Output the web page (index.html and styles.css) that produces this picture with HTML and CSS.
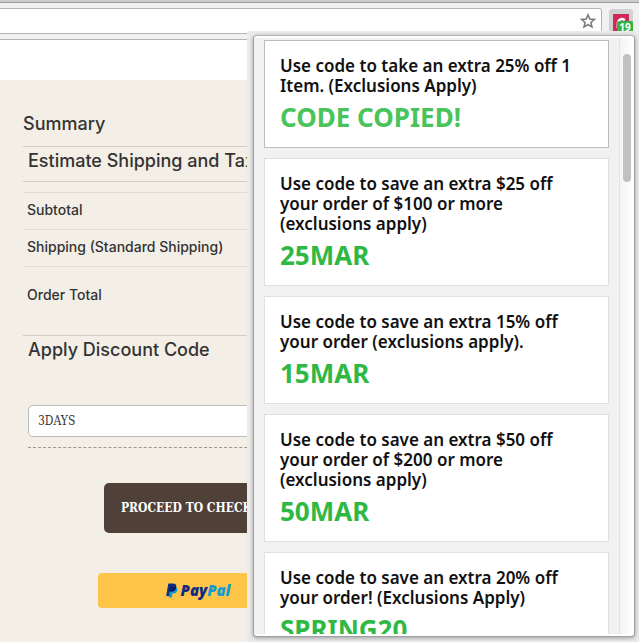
FILE: index.html
```
<!DOCTYPE html>
<html lang="en">
<head>
<meta charset="utf-8">
<meta name="viewport" content="width=device-width, initial-scale=1">
<title>Checkout</title>
<link rel="stylesheet" href="styles.css">
</head>
<body>

<header class="toolbar">
	<div class="addressBar">
		<input class="address" type="text" aria-label="Address">
		<button class="star" aria-label="Bookmark this page">
			<svg width="16" height="16" viewBox="0 0 16 16"><path d="M8 1.8 L9.8 6 L14.4 6.4 L10.9 9.4 L12 13.9 L8 11.5 L4 13.9 L5.1 9.4 L1.6 6.4 L6.2 6 Z" fill="none" stroke="#747679" stroke-width="1.5"/></svg>
		</button>
	</div>
	<button class="extension" aria-label="Coupons">
		<svg width="16" height="18" viewBox="0 0 16 18"><rect width="16" height="18" fill="#cf2a57"/><path d="M11.8 6.2 C8.8 3.8 4.8 5.6 4.8 10 V14" fill="none" stroke="#fff" stroke-width="2.4"/></svg>
		<span class="badge">19</span>
	</button>
</header>

<main class="page">
	<div class="summary">
		<h1>Summary</h1>
		<h2 class="estimate">Estimate Shipping and Tax</h2>
		<table class="totals">
			<tr><th scope="row">Subtotal</th></tr>
			<tr><th scope="row">Shipping (Standard Shipping)</th></tr>
			<tr class="orderTotal"><th scope="row">Order Total</th></tr>
		</table>
		<div class="discount">
			<h2><label for="code">Apply Discount Code</label></h2>
			<input id="code" class="codeInput" type="text" value="3DAYS">
		</div>
		<div class="buttons">
			<button class="checkout">PROCEED TO CHECKOUT</button>
			<button class="paypal" aria-label="PayPal">
				<svg width="12" height="15" viewBox="0 0 12 15"><path d="M4 4 H10 Q12 5 11.2 8 Q10.4 10.6 7.4 10.6 H6.4 L5.8 14.4 H2.8 Z" fill="#139ad6"/><path d="M2.3 0.6 H7 Q11 0.6 10.2 4.6 Q9.4 8.6 5.4 8.6 H3.8 L3 13 H0.2 Z" fill="#0f2c80"/><path d="M4.4 4 H10.2 Q9.8 8.6 5.4 8.6 H3.8 Z" fill="#0a1a5c"/></svg>
				<span class="pay">Pay</span><span class="pal">Pal</span>
			</button>
		</div>
	</div>
</main>

<div class="overlay">
	<section class="popup">
		<div class="list">
			<article class="coupon copied">
				<p>Use code to take an extra 25% off 1 Item. (Exclusions Apply)</p>
				<strong>CODE COPIED!</strong>
			</article>
			<article class="coupon">
				<p>Use code to save an extra $25 off your order of $100 or more (exclusions apply)</p>
				<strong>25MAR</strong>
			</article>
			<article class="coupon">
				<p>Use code to save an extra 15% off your order (exclusions apply).</p>
				<strong>15MAR</strong>
			</article>
			<article class="coupon">
				<p>Use code to save an extra $50 off your order of $200 or more (exclusions apply)</p>
				<strong>50MAR</strong>
			</article>
			<article class="coupon">
				<p>Use code to save an extra 20% off your order! (Exclusions Apply)</p>
				<strong>SPRING20</strong>
			</article>
		</div>
		<div class="track"><div class="thumb"></div></div>
	</section>
</div>

</body>
</html>
```

FILE: styles.css
```
* {
	box-sizing: border-box;
}
body {
	margin: 0;
	height: 100vh;
	display: flex;
	flex-direction: column;
	overflow: hidden;
	position: relative;
	background-color: #fff;
	color: #333;
	font-family: Inter, sans-serif;
}
button {
	border: none;
	padding: 0;
	background: none;
	cursor: pointer;
}
h1, h2, p {
	margin: 0;
}

/* browser bar */
.toolbar {
	display: flex;
	gap: 7px;
	flex: none;
	height: 40px;
	padding: 5px 6px 0 0;
	border-top: 2px solid #ccc;
	border-bottom: 1px solid #b4b4b4;
	background-color: #f1f1f1;
	box-shadow: inset 0 1px #999;
}
.addressBar {
	display: flex;
	flex: 1;
	height: 26px;
	margin-top: 1px;
	padding-right: 5px;
	border: 1px solid #b4b4b4;
	border-left: none;
	border-radius: 0 3px 3px 0;
	background-color: #fff;
}
.address {
	flex: 1;
	border: none;
	background: none;
}
.star {
	display: flex;
	align-items: center;
}
.extension {
	position: relative;
	width: 24px;
	height: 24px;
	margin-top: 2px;
	padding-top: 4px;
	border-radius: 3px;
	background-color: #d2d2d2;
}
.extension svg {
	display: block;
	margin: auto;
}
.badge {
	position: absolute;
	top: 12px;
	right: 0;
	width: 16px;
	height: 13px;
	border-radius: 2px;
	background-color: #2fb344;
	color: #fff;
	font: bold 10px/13px "Noto Sans", sans-serif;
}

/* shop page */
.page {
	flex: 1;
	margin-top: 40px;
	padding: 30px 23px;
	background-color: #f3efe7;
}
.summary {
	width: 350px;
}
h1, h2 {
	font-size: 18px;
	font-weight: 500;
	line-height: 28px;
}
h1 {
	padding-bottom: 8px;
}
.estimate {
	height: 36px;
	padding-left: 5px;
	border: 1px solid #ccc;
	border-width: 1px 0;
}
.totals {
	width: 100%;
	margin-top: 10px;
	border-collapse: collapse;
}
.totals th {
	height: 37px;
	padding: 0 4px 4px;
	border-top: 1px solid #dcdcdc;
	font-size: 14px;
	font-weight: 500;
	text-align: left;
}
.totals .orderTotal th {
	height: 68px;
	padding-bottom: 12px;
}
.discount {
	padding-left: 5px;
	border-top: 1px solid #ccc;
}
.codeInput {
	display: block;
	width: 100%;
	height: 32px;
	margin-top: 41px;
	padding: 0 9px;
	border: 1px solid #bbb;
	border-radius: 5px;
	background-color: #fff;
	color: #333;
	font: 12px "DejaVu Serif Condensed", "DejaVu Serif", serif;
}
.discount::after {
	content: "";
	display: block;
	margin-top: 10px;
	border-top: 1px dashed #9c9a86;
}
.buttons {
	display: flex;
	flex-direction: column;
	align-items: center;
	gap: 40px;
	padding-top: 35px;
}
.checkout {
	width: 188px;
	height: 50px;
	padding-left: 17px;
	border-radius: 5px;
	background-color: #4f4138;
	color: #fff;
	font: bold 12px "DejaVu Serif Condensed", "DejaVu Serif", serif;
	text-align: left;
	white-space: nowrap;
}
.paypal {
	display: flex;
	align-items: center;
	justify-content: center;
	width: 200px;
	height: 35px;
	border-radius: 4px;
	background-color: #ffc549;
	font: italic 800 15px "Open Sans", sans-serif;
}
.paypal svg {
	margin-right: 3px;
}
.pay {
	color: #0f2c80;
}
.pal {
	color: #139ad6;
}

/* coupon popup */
.overlay {
	position: absolute;
	top: 31px;
	right: 0;
	bottom: 0;
	width: 392px;
	padding: 4px 4px 5px 6px;
	overflow: hidden;
	background-color: #ebebeb;
}
.popup {
	display: flex;
	height: 100%;
	padding: 2px 0;
	border: 1px solid #a0a0a0;
	border-top-color: #b4b4b4;
	border-radius: 4px;
	background-color: #fff;
	box-shadow: 0 1px 4px #999;
}
.list {
	display: flex;
	flex-direction: column;
	flex: 1;
	gap: 10px;
	overflow: hidden;
	padding: 2px 10px 0;
	background-color: #f1f1f1;
}
.coupon {
	flex: none;
	padding: 15px;
	border: 1px solid #e0e0e0;
	background-color: #fff;
	color: #111;
	font-family: "Noto Sans", sans-serif;
}
.copied {
	border-color: #bbb;
}
.coupon p {
	font-size: 17px;
	font-weight: 600;
	line-height: 20px;
}
.coupon strong {
	display: block;
	margin-top: 7px;
	padding-bottom: 1px;
	color: #2fb944;
	font-size: 26px;
	line-height: 28px;
}
.copied strong {
	color: #48c45a;
}
.track {
	width: 15px;
	padding: 16px 3px;
	border-left: 1px solid #e4e4e4;
	background: linear-gradient(to right, #f4f4f4, #fff);
}
.thumb {
	width: 8px;
	height: 128px;
	border-radius: 4px;
	background-color: #c1c1c1;
}
```
